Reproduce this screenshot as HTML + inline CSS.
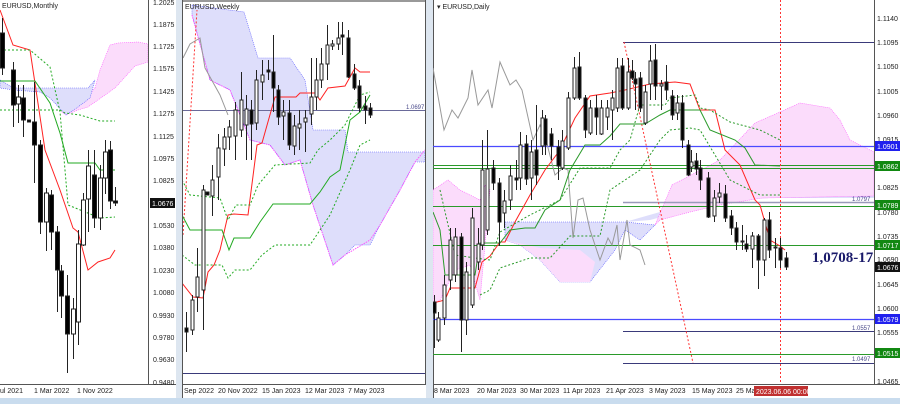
<!DOCTYPE html>
<html><head><meta charset="utf-8"><style>
html,body{margin:0;padding:0;background:#fff}
svg{display:block}
text{font-family:"Liberation Sans",sans-serif;font-size:7px;fill:#222}
</style></head><body>
<svg width="900" height="404" viewBox="0 0 900 404" xmlns="http://www.w3.org/2000/svg">
<defs>
<clipPath id="c1"><rect x="0" y="0" width="148" height="384"/></clipPath>
<clipPath id="c2"><rect x="183" y="2" width="242" height="382"/></clipPath>
<clipPath id="c3"><rect x="433" y="0" width="441" height="384"/></clipPath>
</defs>
<rect width="900" height="404" fill="#dde6f0"/>
<!-- panel 1 -->
<rect x="0" y="0" width="176" height="398" fill="#fff"/>
<line x1="148.5" y1="0" x2="148.5" y2="384" stroke="#555"/>
<line x1="0" y1="384.5" x2="176" y2="384.5" stroke="#555"/>
<g clip-path="url(#c1)">
<polygon points="95,88 100,70 110,45 118,43 138,42 148,44 148,62 135,66 115,88 88,107 78,110 66,115 62,112 70,104 80,98 88,96" fill="#fbdcfb" stroke="#f5f" stroke-width="0.6" stroke-dasharray="1,1"/>
<polygon points="0,80 14,88 40,88 60,88 88,88 95,80 90,98 78,107 66,115 50,98 40,92 14,90 0,88" fill="#dedefb" stroke="#55f" stroke-width="0.6" stroke-dasharray="1,1"/>
<polyline points="0,10 13,45 30,50 45,150 60,190 73,228 78,232 88,270 98,262 110,258 115,250" fill="none" stroke="#f22" stroke-width="1"/>
<polyline points="0,81 35,81 50,103 60,133 68,163 95,163 100,170 115,170" fill="none" stroke="#2a2" stroke-width="1"/>
<polyline points="0,50 30,50 50,67 60,112 68,205 100,218 115,217" fill="none" stroke="#2a2" stroke-dasharray="2,2"/>
<polyline points="0,110 60,110 65,113 80,115 100,121 115,121" fill="none" stroke="#2a2" stroke-dasharray="2,2"/>
</g>
<g stroke="#222">
<line x1="2.5" y1="18" x2="2.5" y2="75"/><rect x="0.5" y="33" width="4" height="35" fill="#000"/>
<line x1="13.5" y1="62" x2="13.5" y2="127"/><rect x="11.5" y="70" width="4" height="35" fill="#000"/>
<line x1="18.5" y1="85" x2="18.5" y2="123"/><rect x="16.5" y="97" width="4" height="7" fill="#fff"/>
<line x1="23.5" y1="85" x2="23.5" y2="137"/><rect x="21.5" y="98" width="4" height="22" fill="#000"/>
<rect x="27.5" y="120" width="3" height="2" fill="#000"/>
<line x1="34.5" y1="82" x2="34.5" y2="183"/><rect x="32.5" y="122" width="4" height="23" fill="#000"/>
<line x1="40.5" y1="140" x2="40.5" y2="234"/><rect x="38.5" y="145" width="4" height="77" fill="#000"/>
<line x1="46.5" y1="188" x2="46.5" y2="251"/><rect x="44.5" y="193" width="4" height="29" fill="#fff"/>
<line x1="51.5" y1="190" x2="51.5" y2="250"/><rect x="49.5" y="195" width="4" height="37" fill="#000"/>
<line x1="57.5" y1="226" x2="57.5" y2="312"/><rect x="55.5" y="232" width="4" height="38" fill="#000"/>
<line x1="61.5" y1="265" x2="61.5" y2="318"/><rect x="59.5" y="271" width="4" height="25" fill="#000"/>
<line x1="67.5" y1="275" x2="67.5" y2="373"/><rect x="65.5" y="296" width="4" height="38" fill="#000"/>
<line x1="73.5" y1="298" x2="73.5" y2="359"/><rect x="71.5" y="309" width="4" height="25" fill="#fff"/>
<line x1="78.5" y1="230" x2="78.5" y2="345"/><rect x="76.5" y="244" width="4" height="78" fill="#fff"/>
<line x1="83.5" y1="193" x2="83.5" y2="246"/><rect x="81.5" y="200" width="4" height="45" fill="#fff"/>
<line x1="88.5" y1="150" x2="88.5" y2="232"/><rect x="86.5" y="166" width="4" height="33" fill="#fff"/>
<line x1="94.5" y1="150" x2="94.5" y2="228"/><rect x="92.5" y="175" width="4" height="43" fill="#000"/>
<line x1="100.5" y1="165" x2="100.5" y2="230"/><rect x="98.5" y="178" width="4" height="40" fill="#fff"/>
<line x1="105.5" y1="140" x2="105.5" y2="194"/><rect x="103.5" y="152" width="4" height="26" fill="#fff"/>
<line x1="110.5" y1="141" x2="110.5" y2="209"/><rect x="108.5" y="150" width="4" height="51" fill="#000"/>
<line x1="115.5" y1="187" x2="115.5" y2="206"/><rect x="113.5" y="201" width="4" height="2" fill="#000"/>
</g>
<text x="2" y="8">EURUSD,Monthly</text>
<g>
<text x="153" y="5">1.2025</text><text x="153" y="27">1.1875</text><text x="153" y="49">1.1725</text><text x="153" y="71">1.1575</text><text x="153" y="94">1.1425</text><text x="153" y="116">1.1275</text><text x="153" y="139">1.1125</text><text x="153" y="161">1.0975</text><text x="153" y="183">1.0825</text>
<rect x="150" y="198" width="25" height="10" fill="#111"/><text x="152" y="206" style="fill:#fff">1.0676</text>
<text x="153" y="228">1.0530</text><text x="153" y="250">1.0380</text><text x="153" y="273">1.0230</text><text x="153" y="295">1.0080</text><text x="153" y="318">0.9930</text><text x="153" y="340">0.9780</text><text x="153" y="362">0.9630</text><text x="153" y="385">0.9480</text>
</g>
<text x="0" y="393">ul 2021</text><text x="34" y="393">1 Mar 2022</text><text x="77" y="393">1 Nov 2022</text>

<!-- panel 2 -->
<rect x="182" y="0" width="244" height="398" fill="#fff"/>
<rect x="182" y="0" width="244" height="2" fill="#999"/>
<line x1="182.5" y1="0" x2="182.5" y2="398" stroke="#555"/>
<line x1="425.5" y1="0" x2="425.5" y2="384" stroke="#555"/>
<line x1="182" y1="384.5" x2="426" y2="384.5" stroke="#555"/>
<g clip-path="url(#c2)">
<polygon points="192,5 244,12 258,58 290,58 305,80 313,130 345,130 348,152 425,152 425,162 415,162 400,190 380,225 370,245 355,245 345,255 333,265 313,205 300,160 285,165 270,145 250,140 230,90 210,80 192,15" fill="#dedefb" stroke="#55f" stroke-width="0.6" stroke-dasharray="1,1"/>
<polyline points="192,15 210,80 230,90 250,140 270,145 285,165 300,160 313,205 333,265 345,255 370,240 380,225 400,190 415,162 425,150" fill="none" stroke="#f5f" stroke-width="1" stroke-dasharray="1.5,1"/>
<line x1="183" y1="110.5" x2="425" y2="110.5" stroke="#6a6a9a"/>
<line x1="183" y1="373.5" x2="425" y2="373.5" stroke="#3a3a7a"/>
<polyline points="183,58 190,44 200,38 205,68 220,95 228,115" fill="none" stroke="#999"/>
<polyline points="183,235 197,10" fill="none" stroke="#f33" stroke-dasharray="2,2"/>
<polyline points="182,283 193,297 203,298 208,272 214,265 220,250 228,215 234,214 248,215 257,145 262,143 275,97 296,97 300,93 315,93 320,100 328,88 345,86 355,68 360,72 370,72" fill="none" stroke="#f22"/>
<polyline points="182,215 190,230 222,230 229,250 234,238 250,238 260,222 273,204 310,204 320,192 330,177 340,170 350,120 360,112 370,95" fill="none" stroke="#2a2"/>
<polyline points="182,180 190,195 220,198 228,220 236,205 250,205 258,185 275,165 310,163 318,150 330,140 345,125 360,95 370,92" fill="none" stroke="#2a2" stroke-dasharray="2,2"/>
<polyline points="182,255 195,265 222,265 228,278 235,270 250,270 262,255 275,245 310,245 320,230 330,215 350,170 360,145 370,140" fill="none" stroke="#2a2" stroke-dasharray="2,2"/>
<g stroke="#222">
<line x1="186.5" y1="312" x2="186.5" y2="352"/><rect x="185" y="328" width="3" height="4" fill="#000"/>
<line x1="192.5" y1="295" x2="192.5" y2="335"/><rect x="191" y="300" width="3" height="30" fill="#fff"/>
<line x1="197.5" y1="248" x2="197.5" y2="312"/><rect x="196" y="277" width="3" height="20" fill="#fff"/>
<line x1="203.5" y1="185" x2="203.5" y2="330"/><rect x="202" y="190" width="3" height="100" fill="#fff"/>
<rect x="206" y="192" width="3" height="3" fill="#000"/>
<line x1="212.5" y1="165" x2="212.5" y2="216"/><rect x="211" y="180" width="3" height="16" fill="#fff"/>
<line x1="218.5" y1="134" x2="218.5" y2="200"/><rect x="217" y="148" width="3" height="29" fill="#fff"/>
<line x1="224.5" y1="128" x2="224.5" y2="166"/><rect x="223" y="137" width="3" height="12" fill="#fff"/>
<line x1="229.5" y1="120" x2="229.5" y2="150"/><rect x="228" y="127" width="3" height="10" fill="#fff"/>
<line x1="235.5" y1="102" x2="235.5" y2="160"/><rect x="234" y="110" width="3" height="26" fill="#fff"/>
<line x1="241.5" y1="72" x2="241.5" y2="137"/><rect x="240" y="100" width="3" height="30" fill="#fff"/>
<line x1="246.5" y1="95" x2="246.5" y2="160"/><rect x="245" y="109" width="3" height="16" fill="#fff"/>
<line x1="251.5" y1="100" x2="251.5" y2="160"/><rect x="250" y="110" width="3" height="14" fill="#000"/>
<line x1="256.5" y1="70" x2="256.5" y2="130"/><rect x="255" y="80" width="3" height="43" fill="#fff"/>
<line x1="262.5" y1="60" x2="262.5" y2="100"/><rect x="261" y="75" width="3" height="7" fill="#fff"/>
<line x1="268.5" y1="60" x2="268.5" y2="80"/><rect x="267" y="70" width="3" height="2" fill="#000"/>
<line x1="273.5" y1="35" x2="273.5" y2="112"/><rect x="272" y="72" width="3" height="16" fill="#000"/>
<line x1="278.5" y1="85" x2="278.5" y2="125"/><rect x="277" y="90" width="3" height="27" fill="#000"/>
<line x1="283.5" y1="100" x2="283.5" y2="140"/><rect x="282" y="112" width="3" height="4" fill="#fff"/>
<line x1="289.5" y1="100" x2="289.5" y2="150"/><rect x="288" y="113" width="3" height="32" fill="#000"/>
<line x1="294.5" y1="115" x2="294.5" y2="155"/><rect x="293" y="126" width="3" height="20" fill="#fff"/>
<line x1="299.5" y1="110" x2="299.5" y2="150"/><rect x="298" y="124" width="3" height="4" fill="#fff"/>
<line x1="305.5" y1="110" x2="305.5" y2="152"/><rect x="304" y="118" width="3" height="4" fill="#fff"/>
<line x1="311.5" y1="58" x2="311.5" y2="125"/><rect x="310" y="97" width="3" height="17" fill="#fff"/>
<line x1="316.5" y1="58" x2="316.5" y2="110"/><rect x="315" y="80" width="3" height="17" fill="#fff"/>
<line x1="321.5" y1="48" x2="321.5" y2="88"/><rect x="320" y="64" width="3" height="16" fill="#fff"/>
<line x1="327.5" y1="25" x2="327.5" y2="80"/><rect x="326" y="45" width="3" height="19" fill="#fff"/>
<line x1="332.5" y1="40" x2="332.5" y2="50"/><rect x="331" y="44" width="3" height="2" fill="#fff"/>
<line x1="338.5" y1="22" x2="338.5" y2="50"/><rect x="337" y="38" width="3" height="6" fill="#fff"/>
<line x1="342.5" y1="22" x2="342.5" y2="55"/><rect x="341" y="35" width="3" height="2" fill="#000"/>
<line x1="348.5" y1="30" x2="348.5" y2="78"/><rect x="347" y="38" width="3" height="39" fill="#000"/>
<line x1="354.5" y1="64" x2="354.5" y2="90"/><rect x="353" y="74" width="3" height="14" fill="#000"/>
<line x1="359.5" y1="80" x2="359.5" y2="112"/><rect x="358" y="86" width="3" height="22" fill="#000"/>
<line x1="365.5" y1="96" x2="365.5" y2="124"/><rect x="364" y="106" width="3" height="4" fill="#000"/>
<line x1="370.5" y1="103" x2="370.5" y2="118"/><rect x="369" y="108" width="3" height="7" fill="#000"/>
</g>
</g>
<text x="185" y="9">EURUSD,Weekly</text>
<text x="406" y="109" style="fill:#4a4a8a;font-size:6px">1.0697</text>
<text x="184" y="393">Sep 2022</text><text x="218" y="393">20 Nov 2022</text><text x="262" y="393">15 Jan 2023</text><text x="305" y="393">12 Mar 2023</text><text x="348" y="393">7 May 2023</text>

<!-- panel 3 -->
<rect x="433" y="0" width="467" height="398" fill="#fff"/>
<line x1="433.5" y1="0" x2="433.5" y2="398" stroke="#555"/>
<line x1="874.5" y1="0" x2="874.5" y2="384" stroke="#555"/>
<line x1="433" y1="384.5" x2="900" y2="384.5" stroke="#555"/>
<g clip-path="url(#c3)">
<polygon points="505,222 625,222 655,225 640,240 625,230 615,250 590,282 560,282 540,260 520,245 505,240" fill="#dedefb" stroke="#55f" stroke-width="0.6" stroke-dasharray="1,1"/>
<polygon points="625,222 660,212 690,205 730,200 770,198 874,198 874,196 762,196 720,205 680,212 650,220" fill="#dedefb"/>
<polygon points="672,185 720,160 755,123 780,112 800,103 830,108 840,120 850,140 874,152 874,196 762,198 720,205 690,212 660,220 655,225" fill="#fbdcfb" stroke="#f5f" stroke-width="0.6" stroke-dasharray="1,1"/>
<polygon points="433,190 448,180 460,190 480,200 485,185 490,190 480,300 470,265 455,270 440,300 433,305" fill="#fbdcfb" stroke="#f5f" stroke-width="0.6" stroke-dasharray="1,1"/>
<polygon points="505,240 520,245 540,260 560,282 590,282 595,262 580,250 540,248" fill="#fbdcfb"/>
<line x1="433" y1="146.5" x2="874" y2="146.5" stroke="#4a4aff" stroke-width="1.3"/>
<line x1="433" y1="165.5" x2="874" y2="165.5" stroke="#2a9a2a"/>
<line x1="433" y1="168.5" x2="874" y2="168.5" stroke="#2a9a2a"/>
<line x1="623" y1="202.5" x2="874" y2="202.5" stroke="#9a9aba" stroke-width="1.5"/>
<line x1="433" y1="206.5" x2="874" y2="206.5" stroke="#2a9a2a"/>
<line x1="433" y1="245.5" x2="874" y2="245.5" stroke="#2a9a2a"/>
<line x1="433" y1="319.5" x2="874" y2="319.5" stroke="#4a4aff" stroke-width="1.3"/>
<line x1="623" y1="331.5" x2="874" y2="331.5" stroke="#3a3a7a"/>
<line x1="433" y1="354.5" x2="874" y2="354.5" stroke="#2a9a2a"/>
<line x1="623" y1="363.5" x2="874" y2="363.5" stroke="#3a3a7a"/>
<line x1="623" y1="42.5" x2="874" y2="42.5" stroke="#3a3a7a"/>
<line x1="624" y1="42" x2="693" y2="363" stroke="#f33" stroke-dasharray="2,2"/>
<line x1="780.5" y1="0" x2="780.5" y2="384" stroke="#f33" stroke-dasharray="2,2"/>
<polyline points="433,68 444,130 452,110 458,118 468,98 472,70 478,105 488,90 492,108 500,62 510,85 516,80 522,90 533,140 540,125 546,140 555,175 563,168 568,170 573,238 578,200 583,198 590,230 600,260 608,238 612,245 617,225 620,260 627,220 630,245 640,250 645,265" fill="none" stroke="#999"/>
<polyline points="433,303 445,300 450,288 475,288 482,262 490,256 500,242 505,242 515,222 530,195 545,170 560,150 575,118 590,96 610,93 625,90 650,84 675,82 690,84 700,110 715,110 725,150 740,165 755,200 760,205 770,240 780,246 785,250" fill="none" stroke="#f22"/>
<polyline points="433,212 440,230 445,275 475,275 480,243 500,243 510,230 525,228 535,228 545,210 560,200 570,170 585,145 600,145 610,136 620,124 645,124 660,115 670,110 700,110 710,130 735,140 745,148 755,165 780,166" fill="none" stroke="#2a9a2a"/>
<polyline points="440,190 455,255 475,258 490,260 500,232 530,215 560,200 580,168 610,168 620,150 630,140 640,105 665,105 670,98 695,95 700,108 710,110 730,122 760,130 780,140" fill="none" stroke="#2a9a2a" stroke-dasharray="2,2"/>
<polyline points="480,295 490,290 500,268 530,258 550,258 570,236 600,236 610,190 640,170 660,140 670,130 690,128 700,130 730,180 760,195 780,195" fill="none" stroke="#2a9a2a" stroke-dasharray="2,2"/>
<g stroke="#222">
<line x1="434.5" y1="295" x2="434.5" y2="348"/><rect x="433" y="302" width="3" height="11" fill="#000"/>
<line x1="438.5" y1="312" x2="438.5" y2="342"/><rect x="437" y="318" width="3" height="22" fill="#fff"/>
<line x1="444.5" y1="275" x2="444.5" y2="325"/><rect x="443" y="285" width="3" height="33" fill="#fff"/>
<line x1="450.5" y1="228" x2="450.5" y2="290"/><rect x="449" y="240" width="3" height="40" fill="#fff"/>
<line x1="455.5" y1="228" x2="455.5" y2="282"/><rect x="454" y="237" width="3" height="38" fill="#fff"/>
<line x1="461.5" y1="233" x2="461.5" y2="352"/><rect x="460" y="237" width="3" height="83" fill="#000"/>
<line x1="466.5" y1="262" x2="466.5" y2="335"/><rect x="465" y="272" width="3" height="48" fill="#fff"/>
<line x1="472.5" y1="208" x2="472.5" y2="308"/><rect x="471" y="218" width="3" height="87" fill="#fff"/>
<line x1="478.5" y1="228" x2="478.5" y2="270"/><rect x="477" y="244" width="3" height="18" fill="#fff"/>
<line x1="482.5" y1="140" x2="482.5" y2="250"/><rect x="481" y="170" width="3" height="75" fill="#fff"/>
<line x1="487.5" y1="130" x2="487.5" y2="235"/><rect x="486" y="169" width="3" height="61" fill="#fff"/>
<line x1="493.5" y1="160" x2="493.5" y2="190"/><rect x="492" y="168" width="3" height="15" fill="#000"/>
<line x1="499.5" y1="178" x2="499.5" y2="246"/><rect x="498" y="183" width="3" height="39" fill="#000"/>
<line x1="504.5" y1="190" x2="504.5" y2="228"/><rect x="503" y="201" width="3" height="12" fill="#fff"/>
<line x1="510.5" y1="165" x2="510.5" y2="210"/><rect x="509" y="176" width="3" height="24" fill="#fff"/>
<line x1="516.5" y1="160" x2="516.5" y2="190"/><rect x="515" y="178" width="3" height="2" fill="#000"/>
<line x1="520.5" y1="132" x2="520.5" y2="190"/><rect x="519" y="145" width="3" height="33" fill="#fff"/>
<line x1="526.5" y1="135" x2="526.5" y2="185"/><rect x="525" y="144" width="3" height="35" fill="#000"/>
<line x1="531.5" y1="140" x2="531.5" y2="200"/><rect x="530" y="152" width="3" height="26" fill="#fff"/>
<line x1="536.5" y1="105" x2="536.5" y2="185"/><rect x="535" y="150" width="3" height="25" fill="#000"/>
<line x1="542.5" y1="110" x2="542.5" y2="155"/><rect x="541" y="118" width="3" height="28" fill="#fff"/>
<line x1="545.5" y1="115" x2="545.5" y2="155"/><rect x="544" y="119" width="3" height="26" fill="#000"/>
<line x1="551.5" y1="128" x2="551.5" y2="160"/><rect x="550" y="134" width="3" height="12" fill="#000"/>
<line x1="558.5" y1="140" x2="558.5" y2="180"/><rect x="557" y="147" width="3" height="19" fill="#000"/>
<line x1="562.5" y1="130" x2="562.5" y2="170"/><rect x="561" y="141" width="3" height="27" fill="#fff"/>
<line x1="568.5" y1="92" x2="568.5" y2="150"/><rect x="567" y="98" width="3" height="50" fill="#fff"/>
<line x1="574.5" y1="57" x2="574.5" y2="100"/><rect x="573" y="68" width="3" height="30" fill="#fff"/>
<line x1="579.5" y1="52" x2="579.5" y2="100"/><rect x="578" y="67" width="3" height="31" fill="#000"/>
<line x1="585.5" y1="95" x2="585.5" y2="138"/><rect x="584" y="98" width="3" height="32" fill="#000"/>
<line x1="590.5" y1="100" x2="590.5" y2="135"/><rect x="589" y="108" width="3" height="25" fill="#fff"/>
<line x1="596.5" y1="95" x2="596.5" y2="135"/><rect x="595" y="108" width="3" height="9" fill="#000"/>
<line x1="601.5" y1="100" x2="601.5" y2="135"/><rect x="600" y="108" width="3" height="26" fill="#fff"/>
<line x1="607.5" y1="100" x2="607.5" y2="130"/><rect x="606" y="108" width="3" height="9" fill="#fff"/>
<line x1="612.5" y1="90" x2="612.5" y2="140"/><rect x="611" y="98" width="3" height="12" fill="#fff"/>
<line x1="617.5" y1="58" x2="617.5" y2="112"/><rect x="616" y="68" width="3" height="40" fill="#fff"/>
<line x1="622.5" y1="58" x2="622.5" y2="110"/><rect x="621" y="66" width="3" height="42" fill="#000"/>
<line x1="628.5" y1="58" x2="628.5" y2="110"/><rect x="627" y="72" width="3" height="36" fill="#fff"/>
<line x1="632.5" y1="60" x2="632.5" y2="80"/><rect x="631" y="71" width="3" height="7" fill="#000"/>
<line x1="635.5" y1="72" x2="635.5" y2="110"/><rect x="634" y="79" width="3" height="5" fill="#000"/>
<line x1="640.5" y1="72" x2="640.5" y2="112"/><rect x="639" y="78" width="3" height="30" fill="#000"/>
<line x1="645.5" y1="85" x2="645.5" y2="125"/><rect x="644" y="92" width="3" height="31" fill="#fff"/>
<line x1="650.5" y1="45" x2="650.5" y2="100"/><rect x="649" y="61" width="3" height="23" fill="#fff"/>
<line x1="655.5" y1="44" x2="655.5" y2="100"/><rect x="654" y="60" width="3" height="26" fill="#000"/>
<line x1="661.5" y1="80" x2="661.5" y2="110"/><rect x="660" y="84" width="3" height="2" fill="#fff"/>
<line x1="666.5" y1="65" x2="666.5" y2="100"/><rect x="665" y="82" width="3" height="8" fill="#000"/>
<line x1="672.5" y1="90" x2="672.5" y2="120"/><rect x="671" y="96" width="3" height="19" fill="#000"/>
<line x1="677.5" y1="95" x2="677.5" y2="120"/><rect x="676" y="103" width="3" height="10" fill="#fff"/>
<line x1="682.5" y1="95" x2="682.5" y2="148"/><rect x="681" y="103" width="3" height="37" fill="#000"/>
<line x1="688.5" y1="140" x2="688.5" y2="176"/><rect x="687" y="145" width="3" height="30" fill="#000"/>
<line x1="691.5" y1="150" x2="691.5" y2="172"/><rect x="690" y="162" width="3" height="5" fill="#fff"/>
<line x1="696.5" y1="153" x2="696.5" y2="175"/><rect x="695" y="161" width="3" height="8" fill="#000"/>
<line x1="700.5" y1="160" x2="700.5" y2="190"/><rect x="699" y="168" width="3" height="12" fill="#000"/>
<line x1="708.5" y1="172" x2="708.5" y2="218"/><rect x="707" y="178" width="3" height="39" fill="#000"/>
<line x1="714.5" y1="190" x2="714.5" y2="222"/><rect x="713" y="198" width="3" height="18" fill="#fff"/>
<line x1="719.5" y1="183" x2="719.5" y2="203"/><rect x="718" y="193" width="3" height="4" fill="#fff"/>
<line x1="725.5" y1="185" x2="725.5" y2="222"/><rect x="724" y="194" width="3" height="24" fill="#000"/>
<line x1="731.5" y1="210" x2="731.5" y2="235"/><rect x="730" y="216" width="3" height="12" fill="#000"/>
<line x1="736.5" y1="222" x2="736.5" y2="250"/><rect x="735" y="228" width="3" height="14" fill="#000"/>
<line x1="742.5" y1="225" x2="742.5" y2="250"/><rect x="741" y="241" width="3" height="1" fill="#fff"/>
<line x1="746.5" y1="235" x2="746.5" y2="252"/><rect x="745" y="244" width="3" height="5" fill="#000"/>
<line x1="752.5" y1="232" x2="752.5" y2="268"/><rect x="751" y="236" width="3" height="13" fill="#fff"/>
<line x1="758.5" y1="234" x2="758.5" y2="289"/><rect x="757" y="236" width="3" height="24" fill="#000"/>
<line x1="764.5" y1="218" x2="764.5" y2="276"/><rect x="763" y="220" width="3" height="40" fill="#fff"/>
<line x1="769.5" y1="212" x2="769.5" y2="258"/><rect x="768" y="220" width="3" height="30" fill="#000"/>
<line x1="775.5" y1="238" x2="775.5" y2="268"/><rect x="774" y="247" width="3" height="1" fill="#fff"/>
<line x1="780.5" y1="238" x2="780.5" y2="268"/><rect x="779" y="248" width="3" height="12" fill="#000"/>
<line x1="786.5" y1="252" x2="786.5" y2="270"/><rect x="785" y="258" width="3" height="9" fill="#000"/>
</g>
</g>
<text x="437" y="9">▾ EURUSD,Daily</text>
<text x="812" y="262" style="font-family:'Liberation Serif',serif;font-size:15px;font-weight:bold;fill:#1a1a6a">1,0708-17</text>
<text x="852" y="201" style="fill:#4a4a8a;font-size:6px">1.0797</text>
<text x="852" y="330" style="fill:#4a4a8a;font-size:6px">1.0557</text>
<text x="852" y="361" style="fill:#4a4a8a;font-size:6px">1.0497</text>
<g>
<text x="877" y="21">1.1140</text><text x="877" y="45">1.1095</text><text x="877" y="69">1.1050</text><text x="877" y="94">1.1005</text><text x="877" y="118">1.0960</text><text x="877" y="142">1.0915</text>
<rect x="875" y="141" width="25" height="10" fill="#2020ee"/><text x="877" y="149" style="fill:#fff">1.0901</text>
<rect x="875" y="161" width="25" height="10" fill="#118811"/><text x="877" y="169" style="fill:#fff">1.0862</text>
<text x="877" y="190">1.0825</text>
<rect x="875" y="200" width="25" height="10" fill="#118811"/><text x="877" y="208" style="fill:#fff">1.0789</text>
<text x="877" y="215">1.0780</text><text x="877" y="239">1.0735</text>
<rect x="875" y="240" width="25" height="10" fill="#118811"/><text x="877" y="248" style="fill:#fff">1.0717</text>
<text x="877" y="262">1.0690</text>
<rect x="875" y="262" width="25" height="10" fill="#111"/><text x="877" y="270" style="fill:#fff">1.0676</text>
<text x="877" y="287">1.0645</text><text x="877" y="311">1.0600</text>
<rect x="875" y="314" width="25" height="10" fill="#2020ee"/><text x="877" y="322" style="fill:#fff">1.0579</text>
<text x="877" y="335">1.0555</text>
<rect x="875" y="348" width="25" height="10" fill="#118811"/><text x="877" y="356" style="fill:#fff">1.0515</text>
<text x="877" y="384">1.0465</text>
</g>
<text x="434" y="393">8 Mar 2023</text><text x="477" y="393">20 Mar 2023</text><text x="520" y="393">30 Mar 2023</text><text x="563" y="393">11 Apr 2023</text><text x="606" y="393">21 Apr 2023</text><text x="649" y="393">3 May 2023</text><text x="692" y="393">15 May 2023</text><text x="736" y="393">25 Ma</text>
<rect x="754" y="386" width="54" height="10" fill="#c03030"/><text x="756" y="394" style="fill:#fff">2023.06.06 00:00</text>
<rect x="0" y="398" width="900" height="6" fill="#c9dcee"/>
</svg>
</body></html>
